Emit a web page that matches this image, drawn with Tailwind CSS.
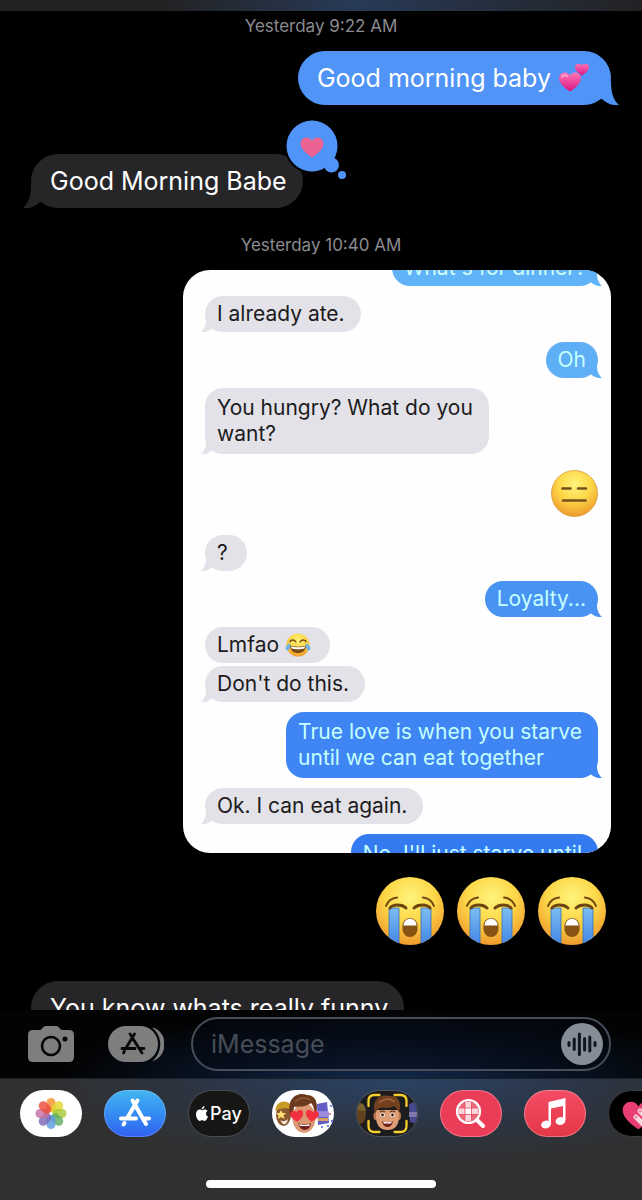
<!DOCTYPE html>
<html lang="en" class="bg-black">
<head>
  <meta charset="UTF-8">
  <meta name="viewport" content="width=device-width, initial-scale=1">
  <title>Messages</title>
  <script src="https://cdn.jsdelivr.net/npm/@tailwindcss/browser@4"></script>
</head>
<body class="h-screen flex flex-col overflow-hidden bg-black text-white font-['Inter','Liberation_Sans',sans-serif]">

  <!-- Shared shapes -->
  <svg class="absolute size-0" aria-hidden="true" xmlns="http://www.w3.org/2000/svg">
    <defs>
      <radialGradient id="face" cx=".5" cy=".3" r=".72">
        <stop offset="0" stop-color="#fff47c"/>
        <stop offset=".5" stop-color="#fdd748"/>
        <stop offset="1" stop-color="#ee972b"/>
      </radialGradient>
      <linearGradient id="tear" x1="0" y1="0" x2="0" y2="1">
        <stop offset="0" stop-color="#7cbdf3"/>
        <stop offset="1" stop-color="#3f82e4"/>
      </linearGradient>
      <linearGradient id="pink" x1="0" y1="0" x2="0" y2="1">
        <stop offset="0" stop-color="#ff77b7"/>
        <stop offset="1" stop-color="#d91382"/>
      </linearGradient>
      <clipPath id="faceClip"><circle cx="34" cy="34" r="34"/></clipPath>
    </defs>
    <symbol id="tail" viewBox="0 0 24 24">
      <path fill="currentColor" d="M16 0C16 11 18 19 24 24C17 25 11 22 7 18L0 18V0Z"/>
    </symbol>
    <symbol id="heart" viewBox="0 0 24 22">
      <path d="M12 21.500C10 20 0 14 0 6.800C0 3 3 .5 6.300 .5C8.800 .5 11 2 12 4.200C13 2 15.200 .5 17.700 .5C21 .5 24 3 24 6.800C24 14 14 20 12 21.500Z"/>
    </symbol>
    <symbol id="cry" viewBox="0 0 68 68">
      <circle cx="34" cy="34" r="34" fill="url(#face)"/>
      <g clip-path="url(#faceClip)" stroke="#3472bd" stroke-width=".8" fill="url(#tear)">
        <path d="M13 31H23V70H13Z"/>
        <path d="M45 31H55V70H45Z"/>
      </g>
      <g fill="none" stroke="#704610" stroke-linecap="round">
        <path stroke-width="2" d="M10 29C12 24 16 21 21 20.500M58 29C56 24 52 21 47 20.500"/>
        <path stroke-width="3" d="M14 31C17 27 26 27 30 31M38 31C42 27 51 27 54 31"/>
      </g>
      <rect x="26.500" y="41" width="15" height="19" rx="7.500" fill="#865313"/>
      <path fill="#fff" d="M27.500 48.500C27.500 39.500 40.500 39.500 40.500 48.500Z"/>
    </symbol>
  </svg>

  <div class="h-[11px] shrink-0 bg-linear-to-r from-[#222223] from-25% via-[#273a57] via-55% to-[#222224]"></div>

  <!-- Transcript -->
  <main class="flex-1 min-h-0 overflow-hidden flex flex-col px-[31px] pt-[5px] text-[25px] leading-[28px]">
    <time class="self-center shrink-0 text-[17px] leading-5 text-[#8b8b90]">Yesterday 9:22 AM</time>

    <div class="relative shrink-0 self-end mt-[15px] rounded-[27px] bg-[#5194f8] pl-[19px] pr-5 py-[13px] flex items-center gap-2">
      <p>Good morning baby</p>
      <svg class="w-8 h-7" viewBox="0 0 32 28" role="img" aria-label="two hearts" fill="url(#pink)">
        <use href="#heart" x="0" y="8" width="22" height="20"/>
        <use href="#heart" x="16" y="-1" width="14" height="13"/>
        <path d="M3 13C4 11 6 11 8 12" fill="none" stroke="#ffb5dc" stroke-width="1.500" stroke-linecap="round"/>
      </svg>
      <svg class="absolute -right-2 bottom-0 size-6 text-[#5194f8]"><use href="#tail"/></svg>
    </div>

    <div class="relative shrink-0 self-start mt-[49px] rounded-[27px] bg-[#262628] pl-[19px] pr-4 py-[13px]">
      <p>Good Morning Babe</p>
      <svg class="absolute -left-2 bottom-0 size-6 -scale-x-100 text-[#262628]"><use href="#tail"/></svg>
      <svg class="absolute -right-[43px] -top-[34px] w-[60px] h-[60px]" viewBox="0 0 60 60" role="img" aria-label="Loved">
        <circle cx="26" cy="26" r="27.500" fill="#000"/>
        <g fill="#5194f8">
          <circle cx="26" cy="26" r="25.500"/>
          <circle cx="45.500" cy="45" r="7.500"/>
          <circle cx="56" cy="55" r="4"/>
        </g>
        <use href="#heart" x="14" y="17" width="24" height="21" fill="#ea6393"/>
      </svg>
    </div>

    <time class="self-center shrink-0 mt-[27px] text-[17px] leading-5 text-[#8b8b90]">Yesterday 10:40 AM</time>

    <!-- Shared screenshot -->
    <section class="shrink-0 self-end w-full max-w-[428px] h-[583px] mt-[15px] rounded-[27px] overflow-hidden bg-[#fefefe] pl-[22px] pr-[13px] flex flex-col gap-[10px] items-start text-[21px] leading-[26px] text-[#1b1b20]">
      <div class="relative shrink-0 self-end -mt-5 rounded-[18px] bg-[#60b3f6] px-3 py-[5px] text-[#d0ffff]">
        <p>What's for dinner?</p>
        <svg class="absolute -right-1 bottom-0 size-4 text-[#60b3f6]"><use href="#tail"/></svg>
      </div>
      <div class="relative shrink-0 rounded-[18px] bg-[#e3e2e8] pl-3 pr-4 py-[5px]">
        <p>I already ate.</p>
        <svg class="absolute -left-1 bottom-0 size-4 -scale-x-100 text-[#e3e2e8]"><use href="#tail"/></svg>
      </div>
      <div class="relative shrink-0 self-end rounded-[18px] bg-[#5eaff5] px-3 py-[5px] text-[#c5ffff]">
        <p>Oh</p>
        <svg class="absolute -right-1 bottom-0 size-4 text-[#5eaff5]"><use href="#tail"/></svg>
      </div>
      <div class="relative shrink-0 rounded-[18px] bg-[#e3e2e8] pl-3 pr-4 py-[7px]">
        <p>You hungry? What do you<br>want?</p>
        <svg class="absolute -left-1 bottom-0 size-4 -scale-x-100 text-[#e3e2e8]"><use href="#tail"/></svg>
      </div>
      <svg class="shrink-0 self-end size-[47px] mt-1.5 mb-2" viewBox="0 0 47 47" role="img" aria-label="expressionless face">
        <circle cx="23.500" cy="23.500" r="23" fill="url(#face)" stroke="#d59a3a" stroke-width=".8"/>
        <path d="M11.500 18.500H19.500M27 18.500H35M12 30.500H34.500" fill="none" stroke="#72511c" stroke-width="2.600" stroke-linecap="round"/>
      </svg>
      <div class="relative shrink-0 rounded-[18px] bg-[#e3e2e8] pl-3 pr-[19px] py-[5px]">
        <p>?</p>
        <svg class="absolute -left-1 bottom-0 size-4 -scale-x-100 text-[#e3e2e8]"><use href="#tail"/></svg>
      </div>
      <div class="relative shrink-0 self-end rounded-[18px] bg-[#4993f2] px-3 py-[5px] text-[#c5ffff]">
        <p>Loyalty...</p>
        <svg class="absolute -right-1 bottom-0 size-4 text-[#4993f2]"><use href="#tail"/></svg>
      </div>
      <div class="shrink-0 flex flex-col items-start gap-[3px]">
        <div class="rounded-[18px] bg-[#e3e2e8] pl-3 pr-[19px] py-[5px] flex items-center gap-1.5">
          <p>Lmfao</p>
          <svg class="w-[26px] h-6" viewBox="0 0 26 24" role="img" aria-label="face with tears of joy">
            <circle cx="13" cy="12" r="11.500" fill="url(#face)"/>
            <path d="M5 8.500C6.500 6.500 9.500 6.500 11 9M15 9C16.500 6.500 19.500 6.500 21 8.500" fill="none" stroke="#704610" stroke-width="1.400" stroke-linecap="round"/>
            <path d="M5 12.500C9 14 17 14 21 12.500C21 17.500 17.500 20 13 20S5 17.500 5 12.500Z" fill="#7b4a14"/>
            <path d="M6 13.200C10 14.500 16 14.500 20 13.200L19.500 15.500C16 16.500 10 16.500 6.500 15.500Z" fill="#fff"/>
            <path d="M5.500 10.500C2 11 0 14 .8 17C3.500 18.500 5.500 15.500 5.500 10.500ZM20.500 10.500C24 11 26 14 25.200 17C22.500 18.500 20.500 15.500 20.500 10.500Z" fill="#72b3e6"/>
          </svg>
        </div>
        <div class="relative rounded-[18px] bg-[#e3e2e8] pl-3 pr-4 py-[5px]">
          <p>Don't do this.</p>
          <svg class="absolute -left-1 bottom-0 size-4 -scale-x-100 text-[#e3e2e8]"><use href="#tail"/></svg>
        </div>
      </div>
      <div class="relative shrink-0 self-end rounded-[18px] bg-[#3f86f4] pl-3 pr-4 py-[7px] text-[#c5ffff]">
        <p>True love is when you starve<br>until we can eat together</p>
        <svg class="absolute -right-1 bottom-0 size-4 text-[#3f86f4]"><use href="#tail"/></svg>
      </div>
      <div class="relative shrink-0 rounded-[18px] bg-[#e3e2e8] pl-3 pr-4 py-[5px]">
        <p>Ok. I can eat again.</p>
        <svg class="absolute -left-1 bottom-0 size-4 -scale-x-100 text-[#e3e2e8]"><use href="#tail"/></svg>
      </div>
      <div class="shrink-0 self-end rounded-[18px] bg-[#347af0] pl-3 pr-4 py-[7px] text-[#c5ffff]">
        <p>No, I'll just starve until</p>
      </div>
    </section>

    <div class="shrink-0 self-end flex gap-[13px] mt-6 mr-[5px]" role="img" aria-label="three loudly crying faces">
      <svg class="size-[68px]"><use href="#cry"/></svg>
      <svg class="size-[68px]"><use href="#cry"/></svg>
      <svg class="size-[68px]"><use href="#cry"/></svg>
    </div>

    <div class="shrink-0 self-start mt-9 rounded-[27px] bg-[#262628] pl-[19px] pr-4 py-[13px]">
      <p>You know whats really funny</p>
    </div>
  </main>

  <!-- Compose bar -->
  <form class="shrink-0 h-[68px] pl-7 pr-[31px] flex items-center bg-[radial-gradient(ellipse_50%_100%_at_60%_100%,#12294a,#07111f_60%,#030304)]">
    <button type="button" aria-label="Camera" class="mr-[34px]">
      <svg class="w-[46px] h-9" viewBox="0 0 46 36">
        <path fill="#7e7e7e" d="M5 4H12C14 4 14.500 0 18 0H28C31.500 0 32 4 34 4H41Q46 4 46 9V31Q46 36 41 36H5Q0 36 0 31V9Q0 4 5 4Z"/>
        <circle cx="23" cy="20" r="9" fill="none" stroke="#050505" stroke-width="2.600"/>
        <circle cx="37" cy="13" r="2.500" fill="#050505"/>
      </svg>
    </button>
    <button type="button" aria-label="Apps" class="mr-[27px]">
      <svg class="w-14 h-9" viewBox="0 0 56 36">
        <path fill="#7e7e7e" d="M44 1.500C52 3 56.500 10 56.500 18S52 33 44 35.500C55 26 55 10 44 1.500Z"/>
        <rect width="50" height="36" rx="18" fill="#7e7e7e"/>
        <path fill="none" stroke="#080808" stroke-width="2.800" stroke-linecap="round" d="M22 8L34 27M26.500 8L18 22M14 22.500H27M32 22.500H36M16.500 25L15.500 27"/>
      </svg>
    </button>
    <div class="relative flex-1 min-w-0">
      <input type="text" aria-label="iMessage" placeholder="iMessage" class="block w-full h-[54px] rounded-full border-2 border-[#494f5a] bg-[#030811]/50 pl-[18px] pr-14 text-[25px] text-white placeholder:text-[#474d57] outline-none">
      <button type="button" aria-label="Record audio" class="absolute right-2 top-1.5 size-[42px] rounded-full bg-[#858d97]">
        <svg viewBox="0 0 42 42" fill="none" stroke="#101721" stroke-width="3" stroke-linecap="round">
          <path d="M8 19.500V22.500M13.200 16V26.500M18.400 11V31.500M23.600 15.500V27M28.800 14V28M34 19.500V22.500"/>
        </svg>
      </button>
    </div>
  </form>

  <!-- App drawer -->
  <footer class="shrink-0 h-[122px] overflow-hidden border-t border-[#1b2028] bg-[#303031] bg-[radial-gradient(ellipse_55%_70%_at_62%_0%,#2a4265,#2c3441_60%,transparent)] pt-[11px] pb-3 pl-5 flex flex-col justify-between">
    <nav aria-label="iMessage apps" class="flex gap-[22px]">
      <button type="button" aria-label="Photos" class="shrink-0 w-[62px] h-[47px] rounded-full bg-white">
        <svg viewBox="-31 -23.500 62 47">
          <g fill-opacity=".82">
            <rect x="-4.500" y="-15.500" width="9" height="14" rx="4.500" fill="#f5942d"/>
            <rect x="-4.500" y="-15.500" width="9" height="14" rx="4.500" fill="#e3d72e" transform="rotate(45)"/>
            <rect x="-4.500" y="-15.500" width="9" height="14" rx="4.500" fill="#a9ca37" transform="rotate(90)"/>
            <rect x="-4.500" y="-15.500" width="9" height="14" rx="4.500" fill="#5eae62" transform="rotate(135)"/>
            <rect x="-4.500" y="-15.500" width="9" height="14" rx="4.500" fill="#5b9ade" transform="rotate(180)"/>
            <rect x="-4.500" y="-15.500" width="9" height="14" rx="4.500" fill="#7b68b6" transform="rotate(225)"/>
            <rect x="-4.500" y="-15.500" width="9" height="14" rx="4.500" fill="#c36fa4" transform="rotate(270)"/>
            <rect x="-4.500" y="-15.500" width="9" height="14" rx="4.500" fill="#ec4b3a" transform="rotate(315)"/>
          </g>
        </svg>
      </button>
      <button type="button" aria-label="App Store" class="shrink-0 w-[62px] h-[47px] rounded-full bg-linear-to-b from-[#43b5f1] to-[#315ff0] inset-ring inset-ring-white/20">
        <svg viewBox="0 0 62 47" fill="none" stroke="#fff" stroke-width="4" stroke-linecap="round">
          <path d="M28.500 10.500L42 34M33.500 10.500L23.500 27.500M17 28.500H32M41 28.500H45M20.500 33L19.500 34.500"/>
        </svg>
      </button>
      <button type="button" aria-label="Apple Pay" class="shrink-0 w-[62px] h-[47px] rounded-full bg-[#161615] border border-[#4b4d50] flex items-center justify-center gap-0.5 text-[18px] font-medium">
        <svg class="w-3 h-[15px]" viewBox="0 0 12 15" fill="#fff">
          <path d="M8.500 0C8.700 1.800 7.200 3.500 5.700 3.400C5.500 1.800 7 .2 8.500 0ZM6.100 4.300C6.900 4.300 7.700 3.500 8.900 3.500C10 3.500 11 4.100 11.500 4.900C9.300 6.200 9.600 9.500 12 10.400C11.300 12.300 10 14.800 8.600 14.900C7.700 14.900 7.300 14.300 6.200 14.300S4.600 14.900 3.800 14.900C2 14.900 0 11.500 0 8.500C0 5.500 1.800 3.600 3.700 3.600C4.700 3.600 5.500 4.300 6.100 4.300Z"/>
        </svg>
        <span>Pay</span>
      </button>
      <button type="button" aria-label="Memoji stickers" class="shrink-0 w-[62px] h-[47px] rounded-full bg-white overflow-hidden">
        <svg viewBox="0 0 62 47">
          <!-- star-eyed friend -->
          <ellipse cx="11.500" cy="25" rx="7.500" ry="11" fill="#8b572d"/>
          <path d="M3.500 21C3 9 20 8 20 20C15 17 8 18 3.500 21Z" fill="#c89b24"/>
          <path d="M9 20L10.500 23H14L11.500 25.500L12.500 29L9 27L6 29L6.500 25.500L4 23H7.500Z" fill="#ffe070"/>
          <path d="M8 30Q12 33 16 29Q15 35 11 34Z" fill="#f8efe6"/>
          <!-- wizard friend -->
          <path d="M45 14L55 12L57 33L46 35Z" fill="#625ec6"/>
          <rect x="45" y="21" width="12" height="6" rx="2" fill="#9b8bdc"/>
          <path d="M46 28H56V31H46Z" fill="#d7a060"/>
          <g fill="#4e69d8"><circle cx="59" cy="16" r="1"/><circle cx="60" cy="31" r="1.200"/><circle cx="56" cy="36" r="1"/><circle cx="50" cy="37" r="1"/></g>
          <circle cx="58" cy="24" r="1" fill="#e9537d"/>
          <!-- heart-eyed face -->
          <ellipse cx="32" cy="28" rx="11.500" ry="15" fill="#dc9873"/>
          <path d="M18 26C14 6 27 2 35 5C46 5 46 18 44 25C42 21 42 16 39 13C33 18 25 16 22 17C22 21 20 23 18 26Z" fill="#6c3a1f"/>
          <path d="M23 12C28 7 33 7 38 10" fill="none" stroke="#925a35" stroke-width="1.500"/>
          <g fill="#f2303f">
            <use href="#heart" x="18" y="20" width="14" height="12" transform="rotate(-8 25 26)"/>
            <use href="#heart" x="33" y="20" width="14" height="12" transform="rotate(8 40 26)"/>
          </g>
          <path d="M26 33Q32 36 39 33Q38 40 32.500 40Q28 40 26 33Z" fill="#6d221d"/>
          <path d="M27 34Q32 36 38 34L37 36H28Z" fill="#fff"/>
        </svg>
      </button>
      <button type="button" aria-label="Memoji" class="shrink-0 w-[62px] h-[47px] rounded-full bg-[#1c1c1e] border border-[#53575e] overflow-hidden">
        <svg viewBox="1 1 60 45">
          <ellipse cx="4" cy="24" rx="6" ry="10" fill="#62421f"/>
          <path d="M0 13Q9 11 10 21L0 20Z" fill="#78612d"/>
          <path d="M53 14L61 11V34L54 32Z" fill="#474991"/>
          <path d="M53 22H62V27H53Z" fill="#8177a9"/>
          <ellipse cx="19.500" cy="26" rx="2" ry="4" fill="#b97750"/><ellipse cx="43" cy="26" rx="2" ry="4" fill="#b97750"/>
          <path d="M20 20H43V28Q42 40 31.500 40Q21 40 20 28Z" fill="#df9d75"/>
          <path d="M19 23C15 10 24 4 33 6C43 5 46 13 43 23C42 20 41 18 38 16C32 20 26 16 22 19Z" fill="#73401f"/>
          <path d="M23 13C28 8 34 8 39 12" fill="none" stroke="#a66a3e" stroke-width="1.500"/>
          <path d="M24 22Q26 20 29 22M34 22Q37 20 39 22" fill="none" stroke="#5b3018" stroke-width="1.200"/>
          <g fill="#fff"><ellipse cx="26.500" cy="25" rx="2.300" ry="1.900"/><ellipse cx="36.500" cy="25" rx="2.300" ry="1.900"/></g>
          <g fill="#33201a"><circle cx="26.500" cy="25" r="1.400"/><circle cx="36.500" cy="25" r="1.400"/></g>
          <path d="M26 31Q31.500 33 37 31Q36 37 31.500 37T26 31Z" fill="#74201c"/>
          <path d="M27 31.500Q31.500 33 36 31.500L35 33.500H28Z" fill="#fff"/>
          <path d="M12.500 16V11Q12.500 5 18.500 5H23.500M38.500 5H44.500Q50.500 5 50.500 11V16M50.500 31V36Q50.500 42 44.500 42H38.500M23.500 42H18.500Q12.500 42 12.500 36V31" fill="none" stroke="#f5cf2c" stroke-width="2.300" stroke-linecap="round"/>
        </svg>
      </button>
      <button type="button" aria-label="Images" class="shrink-0 w-[62px] h-[47px] rounded-full bg-[#ea3d57] inset-ring inset-ring-white/30">
        <svg viewBox="0 0 62 47">
          <circle cx="28.500" cy="21.500" r="11" fill="#ed6a7d"/>
          <path fill="#fbd5d9" d="M25 12H31V18H25ZM18.500 18H25V24H18.500ZM31 18H38V24H31ZM25 24H31V31H25Z"/>
          <path fill="#fff" d="M25 18H31V24H25Z"/>
          <path d="M25 11V32M31.500 11V32M18 18H39M18 24.500H39" fill="none" stroke="#e94b61" stroke-width=".8"/>
          <circle cx="28.500" cy="21.500" r="11.500" fill="none" stroke="#fff" stroke-width="2.200"/>
          <path d="M37 30L43 36" stroke="#fff" stroke-width="4" stroke-linecap="round"/>
        </svg>
      </button>
      <button type="button" aria-label="Music" class="shrink-0 w-[62px] h-[47px] rounded-full bg-linear-to-b from-[#f44c64] to-[#e33745] inset-ring inset-ring-white/30">
        <svg viewBox="0 0 62 47" fill="#fff">
          <path d="M24.500 12L41.500 8V30H39V16L27 18.500V34H24.500Z"/>
          <ellipse cx="22" cy="34.500" rx="5" ry="3.800" transform="rotate(-15 22 34.500)"/>
          <ellipse cx="36.500" cy="31" rx="5" ry="3.800" transform="rotate(-15 36.500 31)"/>
        </svg>
      </button>
      <button type="button" aria-label="Digital Touch" class="shrink-0 w-[62px] h-[47px] rounded-full bg-black border border-[#3b3d40]">
        <svg viewBox="1 1 60 45">
          <use href="#heart" x="14" y="11" width="33" height="29" fill="#e83e74"/>
          <g fill="none" stroke="#f9d7df" stroke-width="5" stroke-linecap="round"><path d="M28 27L37 36M32 21L42 31"/></g>
          <g fill="#e98ba7"><circle cx="28" cy="27" r="1.500"/><circle cx="32" cy="21" r="1.500"/></g>
        </svg>
      </button>
    </nav>
    <div class="self-center -ml-5 w-[230px] h-2 rounded-full bg-white"></div>
  </footer>

</body>
</html>
